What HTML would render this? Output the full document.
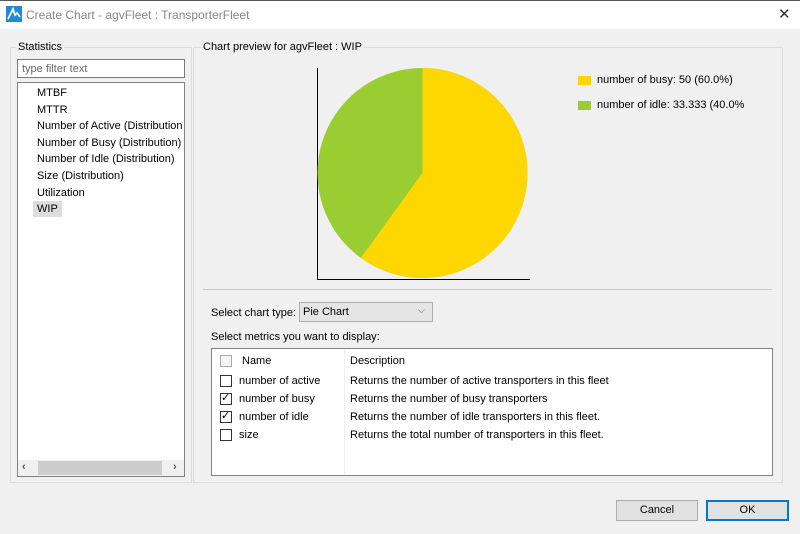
<!DOCTYPE html>
<html><head><meta charset="utf-8"><style>
*{margin:0;padding:0;box-sizing:border-box}
body{width:800px;height:534px;background:#f0f0f0;font-family:"Liberation Sans",sans-serif;font-size:11px;color:#000;position:relative;overflow:hidden}
.a{position:absolute}
.t{white-space:nowrap}
.cb{position:absolute;width:12px;height:12px;border:1px solid #333;background:#fff}
</style></head><body>
<div class="a" style="left:0;top:0;width:800px;height:29px;background:#fff"></div>
<div class="a" style="left:0;top:0;width:800px;height:1px;background:#555"></div>
<svg class="a" style="left:6px;top:6px" width="16" height="16"><rect width="16" height="16" fill="#1e8ad6"/><path d="M2 13 L7 3 L9 9 L11 7 L14 11" stroke="#fff" stroke-width="1.8" fill="none"/></svg>
<div class="a t" style="left:26px;top:8px;font-size:12px;color:#888">Create Chart - agvFleet : TransporterFleet</div>
<div class="a t" style="left:778px;top:5px;font-size:15px;color:#333">✕</div>

<!-- left group -->
<div class="a" style="left:10px;top:47px;width:182px;height:436px;border:1px solid #dcdcdc"></div>
<div class="a t" style="left:16px;top:41px;background:#f0f0f0;padding:0 2px">Statistics</div>
<div class="a" style="left:17px;top:59px;width:168px;height:19px;border:1px solid #7a7a7a;background:#fff"></div>
<div class="a t" style="left:22px;top:63px;color:#666">type filter text</div>
<div class="a" style="left:17px;top:82px;width:168px;height:395px;border:1px solid #828282;background:#fff;overflow:hidden">
<div class="a t" style="left:19px;top:2px;line-height:16.6px">MTBF<br>MTTR<br>Number of Active (Distribution<br>Number of Busy (Distribution)<br>Number of Idle (Distribution)<br>Size (Distribution)<br>Utilization</div>
<div class="a t" style="left:15px;top:118px;background:#ddd;padding:0 4px;line-height:16px">WIP</div>
<div class="a" style="left:0;top:377px;width:166px;height:16px;background:#f0f0f0"></div>
<div class="a" style="left:20px;top:378px;width:124px;height:14px;background:#cdcdcd"></div>
<div class="a t" style="left:4px;top:378px;font-weight:bold;color:#555">‹</div>
<div class="a t" style="left:155px;top:378px;font-weight:bold;color:#555">›</div>
</div>

<!-- right group -->
<div class="a" style="left:193px;top:47px;width:590px;height:436px;border:1px solid #dcdcdc"></div>
<div class="a t" style="left:201px;top:41px;background:#f0f0f0;padding:0 2px">Chart preview for agvFleet : WIP</div>
<div class="a" style="left:317px;top:68px;width:1px;height:212px;background:#000"></div>
<div class="a" style="left:317px;top:279px;width:213px;height:1px;background:#000"></div>
<svg class="a" style="left:0;top:0" width="800" height="534">
<circle cx="422.5" cy="173" r="105" fill="#9acd32"/>
<path d="M422.5 173 L422.5 68 A105 105 0 1 1 360.8 258 Z" fill="#ffd700"/>
</svg>
<div class="a" style="left:578px;top:76px;width:13px;height:9px;background:#ffd700"></div>
<div class="a t" style="left:597px;top:74px;font-size:11px">number of busy: 50 (60.0%)</div>
<div class="a" style="left:578px;top:101px;width:13px;height:9px;background:#9acd32"></div>
<div class="a t" style="left:597px;top:99px;font-size:11px">number of idle: 33.333 (40.0%</div>
<div class="a" style="left:203px;top:289px;width:569px;height:1px;background:#c8c8c8"></div>

<div class="a t" style="left:211px;top:307px">Select chart type:</div>
<div class="a" style="left:299px;top:302px;width:134px;height:20px;border:1px solid #adadad;background:#e5e5e5"></div>
<div class="a t" style="left:303px;top:306px">Pie Chart</div>
<div class="a t" style="left:418px;top:305px;font-size:9px;color:#555">⌵</div>
<div class="a t" style="left:211px;top:331px">Select metrics you want to display:</div>

<div class="a" style="left:211px;top:348px;width:562px;height:128px;border:1px solid #828282;background:#fff">
<div class="a" style="left:132px;top:0;width:1px;height:126px;background:#eee"></div>
<div class="cb" style="left:8px;top:6px;border-color:#aaa;background:#f4f4f4"></div>
<div class="a t" style="left:30px;top:6px">Name</div>
<div class="a t" style="left:138px;top:6px">Description</div>
<div class="cb" style="left:8px;top:26px"></div>
<div class="a t" style="left:27px;top:26px">number of active</div>
<div class="a t" style="left:138px;top:26px">Returns the number of active transporters in this fleet</div>
<div class="cb" style="left:8px;top:44px"></div><div class="a t" style="left:9px;top:42px;font-size:11px">✓</div>
<div class="a t" style="left:27px;top:44px">number of busy</div>
<div class="a t" style="left:138px;top:44px">Returns the number of busy transporters</div>
<div class="cb" style="left:8px;top:62px"></div><div class="a t" style="left:9px;top:60px;font-size:11px">✓</div>
<div class="a t" style="left:27px;top:62px">number of idle</div>
<div class="a t" style="left:138px;top:62px">Returns the number of idle transporters in this fleet.</div>
<div class="cb" style="left:8px;top:80px"></div>
<div class="a t" style="left:27px;top:80px">size</div>
<div class="a t" style="left:138px;top:80px">Returns the total number of transporters in this fleet.</div>
</div>

<div class="a" style="left:616px;top:500px;width:82px;height:21px;border:1px solid #adadad;background:#e1e1e1;text-align:center;line-height:19px">Cancel</div>
<div class="a" style="left:706px;top:500px;width:83px;height:21px;border:2px solid #0078d7;background:#e1e1e1;text-align:center;line-height:17px">OK</div>
</body></html>
